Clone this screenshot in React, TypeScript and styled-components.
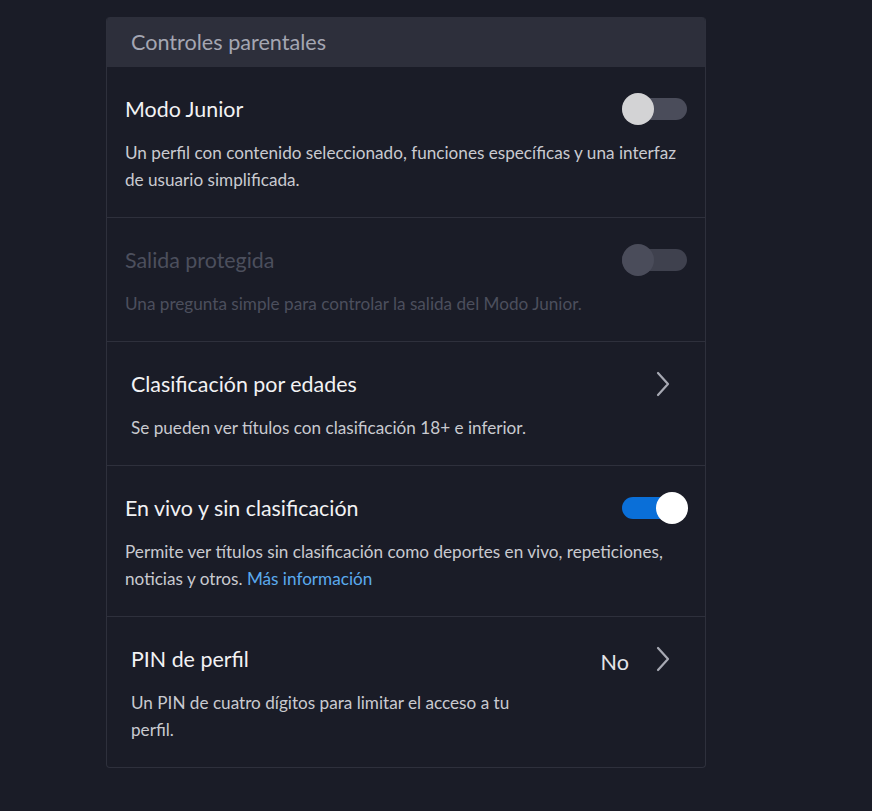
import React from "react";
import styled, { createGlobalStyle } from "styled-components";

const Global = createGlobalStyle`
  html, body { margin: 0; padding: 0; background: #1a1c27; }
  body { font-family: Lato, "Noto Sans", sans-serif; }
`;

const Page = styled.div`
  padding: 17px 0 40px 106px;
`;

const Panel = styled.section`
  width: 598px;
  border: 1px solid #2e303c;
  border-top: none;
  border-radius: 4px;
  overflow: hidden;
  background: #1a1c27;
`;

const Header = styled.header`
  height: 50px;
  display: flex;
  align-items: center;
  padding-left: 24px;
  background: #2d2f3b;
  color: #a4a6b2;
  font-size: 21.6px;
`;

const Row = styled.div<{ $indent: number; $right: number }>`
  display: flex;
  flex-direction: column;
  gap: 18px;
  padding: 30px ${(p) => p.$right}px 24px ${(p) => p.$indent}px;
  border-top: 1px solid #2e303c;
  &:first-of-type { border-top: none; }
`;

const TitleLine = styled.div`
  display: flex;
  align-items: center;
  justify-content: space-between;
  height: 24px;
`;

const Title = styled.div<{ $disabled?: boolean }>`
  font-size: 21.4px;
  line-height: 24px;
  color: ${(p) => (p.$disabled ? "#4c4f5d" : "#f2f2f4")};
`;

const Desc = styled.div<{ $disabled?: boolean; $max?: number }>`
  font-size: 17.15px;
  line-height: 27px;
  max-width: ${(p) => (p.$max ? `${p.$max}px` : "none")};
  color: ${(p) => (p.$disabled ? "#4c4f5d" : "#c9cad0")};
`;

const Link = styled.a`
  color: #5aaaee;
  text-decoration: none;
`;

const Track = styled.div<{ $on?: boolean; $disabled?: boolean }>`
  position: relative;
  width: 65px;
  height: 22px;
  border-radius: 11px;
  flex-shrink: 0;
  background: ${(p) => (p.$on ? "#0a6fd8" : p.$disabled ? "#3f414e" : "#4a4c5a")};
`;

const Knob = styled.div<{ $on?: boolean; $disabled?: boolean }>`
  position: absolute;
  top: -5px;
  left: ${(p) => (p.$on ? "34px" : "0")};
  width: 32px;
  height: 32px;
  border-radius: 50%;
  background: ${(p) => (p.$on ? "#ffffff" : p.$disabled ? "#4a4c5a" : "#d3d3d5")};
`;

const Right = styled.div`
  display: flex;
  align-items: center;
  gap: 26px;
`;

const Value = styled.span`
  font-size: 21.6px;
  color: #e4e4e8;
  margin-top: 5px;
`;

const Chevron = () => (
  <svg width="16" height="26" viewBox="0 0 16 26" style={{ display: "block" }}>
    <path d="M3 2 L13 13 L3 24" fill="none" stroke="#a7a9b3" strokeWidth="2.2" strokeLinecap="round" strokeLinejoin="round" />
  </svg>
);

const Toggle = ({ on, disabled }: { on?: boolean; disabled?: boolean }) => (
  <Track $on={on} $disabled={disabled}>
    <Knob $on={on} $disabled={disabled} />
  </Track>
);

export default function App() {
  return (
    <Page>
      <Global />
      <Panel>
        <Header>Controles parentales</Header>
        <Row $indent={18} $right={18}>
          <TitleLine>
            <Title>Modo Junior</Title>
            <Toggle />
          </TitleLine>
          <Desc>
            Un perfil con contenido seleccionado, funciones específicas y una interfaz de usuario simplificada.
          </Desc>
        </Row>
        <Row $indent={18} $right={18}>
          <TitleLine>
            <Title $disabled>Salida protegida</Title>
            <Toggle disabled />
          </TitleLine>
          <Desc $disabled>Una pregunta simple para controlar la salida del Modo Junior.</Desc>
        </Row>
        <Row $indent={24} $right={34}>
          <TitleLine>
            <Title>Clasificación por edades</Title>
            <Right>
              <Chevron />
            </Right>
          </TitleLine>
          <Desc>Se pueden ver títulos con clasificación 18+ e inferior.</Desc>
        </Row>
        <Row $indent={18} $right={18}>
          <TitleLine>
            <Title>En vivo y sin clasificación</Title>
            <Toggle on />
          </TitleLine>
          <Desc>
            Permite ver títulos sin clasificación como deportes en vivo, repeticiones, noticias y otros.{" "}
            <Link href="#">Más información</Link>
          </Desc>
        </Row>
        <Row $indent={24} $right={34}>
          <TitleLine>
            <Title>PIN de perfil</Title>
            <Right>
              <Value>No</Value>
              <Chevron />
            </Right>
          </TitleLine>
          <Desc $max={410}>Un PIN de cuatro dígitos para limitar el acceso a tu perfil.</Desc>
        </Row>
      </Panel>
    </Page>
  );
}
